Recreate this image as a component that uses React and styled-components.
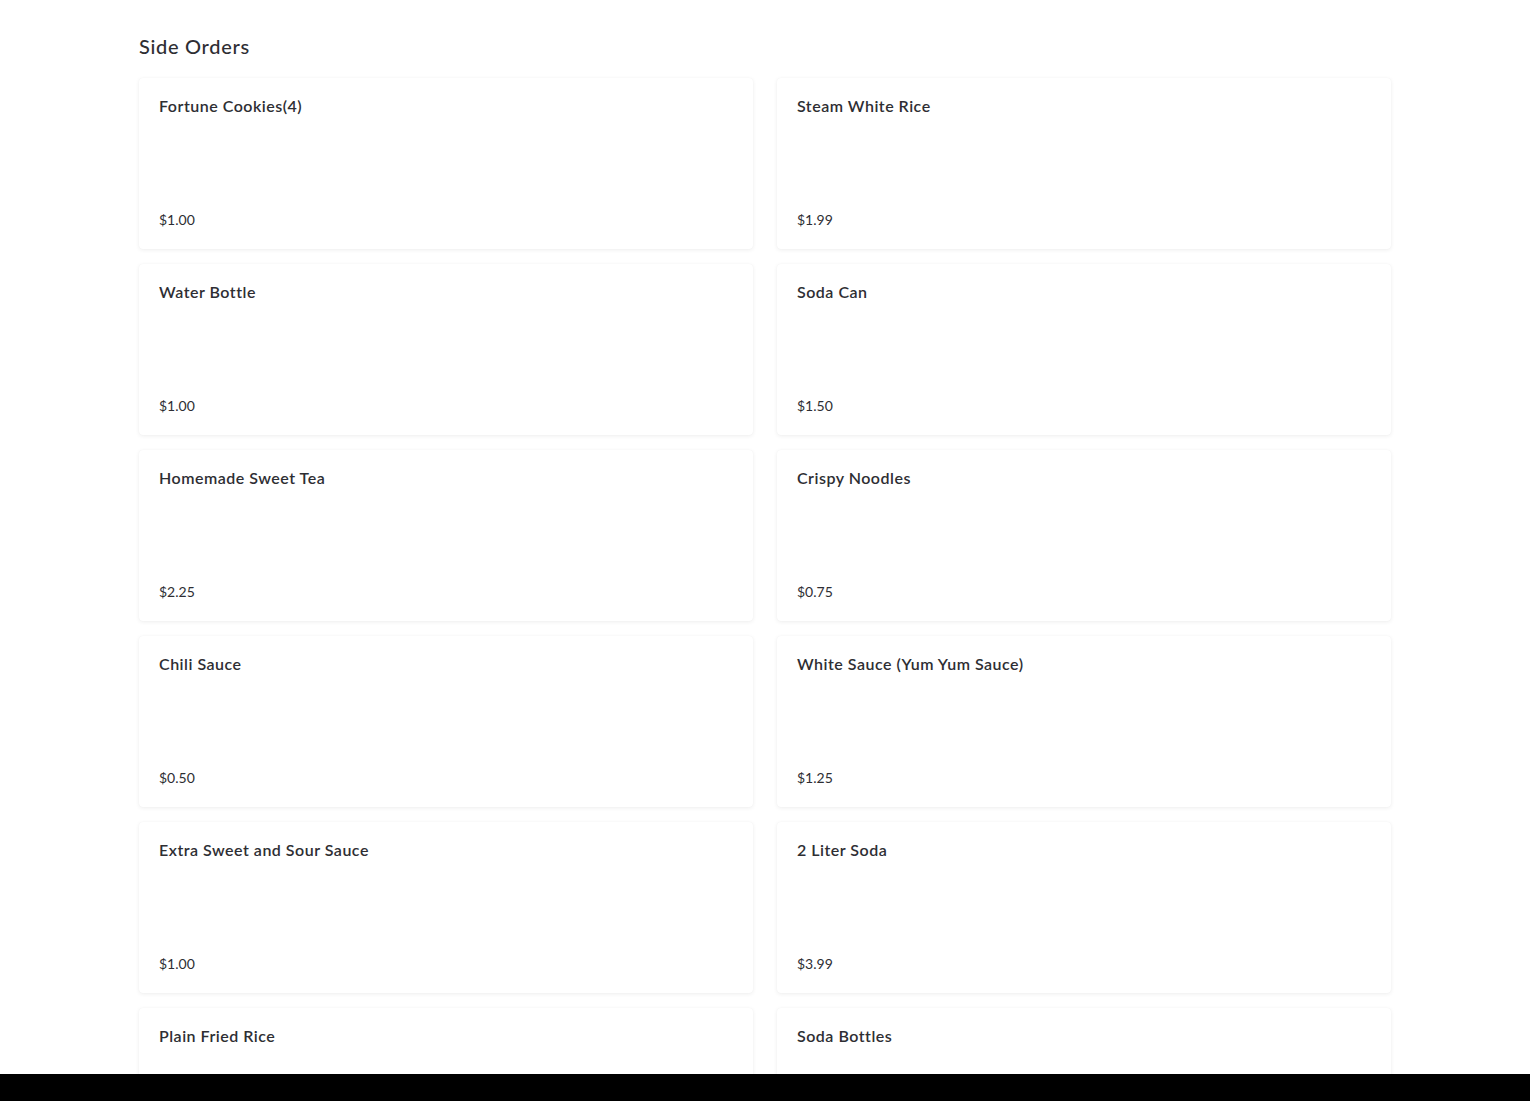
import React from "react";
import styled, { createGlobalStyle } from "styled-components";

const GlobalStyle = createGlobalStyle`
  body {
    margin: 0;
    background: #fff;
    font-family: "Lato", "Noto Sans", sans-serif;
    color: #2e2e33;
  }
`;

const Section = styled.section`
  max-width: 1252px;
  margin: 0 auto;
  padding: 32px 0 0;
`;

const Heading = styled.h2`
  margin: 0 0 18px;
  font-size: 20px;
  line-height: 28px;
  font-weight: 500;
  letter-spacing: 0.7px;
  color: #2e2e33;
`;

const Grid = styled.div`
  display: grid;
  grid-template-columns: 1fr 1fr;
  column-gap: 24px;
  row-gap: 15px;
`;

const Card = styled.div`
  height: 171px;
  box-sizing: border-box;
  padding: 18px 20px 20px;
  background: #fff;
  border-radius: 4px;
  box-shadow: 0 1px 4px rgba(0, 0, 0, 0.07), 0 0 1px rgba(0, 0, 0, 0.05);
  display: flex;
  flex-direction: column;
  justify-content: space-between;
`;

const Title = styled.div`
  font-size: 16px;
  line-height: 20px;
  font-weight: 600;
  letter-spacing: 0.5px;
  color: #2e2e33;
`;

const Price = styled.div`
  font-size: 14px;
  line-height: 18px;
  color: #2e2e33;
`;

const BottomBar = styled.div`
  position: fixed;
  left: 0;
  right: 0;
  bottom: 0;
  height: 27px;
  background: #000;
`;

const items = [
  ["Fortune Cookies(4)", "$1.00"],
  ["Steam White Rice", "$1.99"],
  ["Water Bottle", "$1.00"],
  ["Soda Can", "$1.50"],
  ["Homemade Sweet Tea", "$2.25"],
  ["Crispy Noodles", "$0.75"],
  ["Chili Sauce", "$0.50"],
  ["White Sauce (Yum Yum Sauce)", "$1.25"],
  ["Extra Sweet and Sour Sauce", "$1.00"],
  ["2 Liter Soda", "$3.99"],
  ["Plain Fried Rice", null],
  ["Soda Bottles", null],
];

const App = () => (
  <>
    <GlobalStyle />
    <Section>
      <Heading>Side Orders</Heading>
      <Grid>
        {items.map(([name, price]) => (
          <Card key={name}>
            <Title>{name}</Title>
            {price && <Price>{price}</Price>}
          </Card>
        ))}
      </Grid>
    </Section>
    <BottomBar />
  </>
);

export default App;
